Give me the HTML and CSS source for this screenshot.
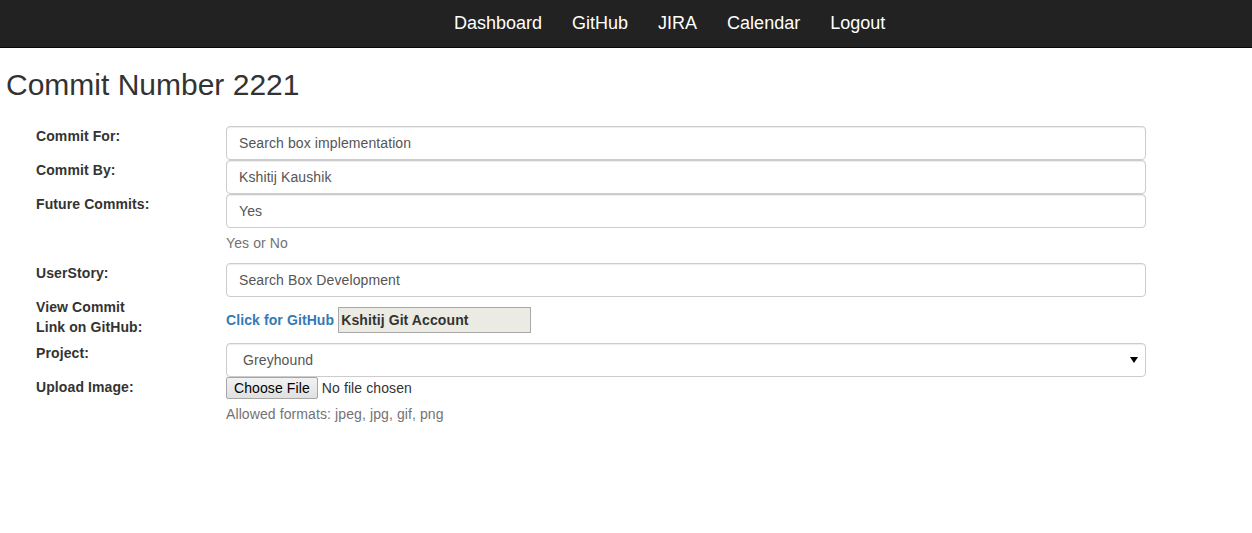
FILE: index.html
```html
<!DOCTYPE html>
<html>
<head>
<meta charset="utf-8">
<title>Commit Number 2221</title>
<link rel="stylesheet" href="styles.css">
</head>
<body>
<nav class="navbar">
  <ul class="nav">
    <li><a href="#">Dashboard</a></li>
    <li><a href="#">GitHub</a></li>
    <li><a href="#">JIRA</a></li>
    <li><a href="#">Calendar</a></li>
    <li><a href="#">Logout</a></li>
  </ul>
</nav>
<h2 class="title">Commit Number 2221</h2>
<form class="form">
  <div class="row">
    <label class="label">Commit For:</label>
    <div class="control"><input class="input" type="text" value="Search box implementation"></div>
  </div>
  <div class="row">
    <label class="label">Commit By:</label>
    <div class="control"><input class="input" type="text" value="Kshitij Kaushik"></div>
  </div>
  <div class="row">
    <label class="label">Future Commits:</label>
    <div class="control">
      <input class="input" type="text" value="Yes">
      <span class="help">Yes or No</span>
    </div>
  </div>
  <div class="row">
    <label class="label">UserStory:</label>
    <div class="control"><input class="input" type="text" value="Search Box Development"></div>
  </div>
  <div class="row">
    <label class="label">View Commit<br>Link on GitHub:</label>
    <div class="control link-line">
      <a class="gh-link" href="#">Click for GitHub</a>
      <input class="account" type="text" value="Kshitij Git Account" disabled>
    </div>
  </div>
  <div class="row">
    <label class="label">Project:</label>
    <div class="control">
      <select class="input select">
        <option>Greyhound</option>
      </select>
    </div>
  </div>
  <div class="row">
    <label class="label">Upload Image:</label>
    <div class="control">
      <input class="file" type="file">
      <span class="help">Allowed formats: jpeg, jpg, gif, png</span>
    </div>
  </div>
</form>
</body>
</html>
```
FILE: styles.css
```css
* { box-sizing: border-box; }
body {
  margin: 0;
  font-family: "Liberation Sans", Arial, Helvetica, sans-serif;
  font-size: 14px;
  line-height: 20px;
  color: #333;
  background: #fff;
}
.navbar {
  background: #222;
  height: 48px;
  border-bottom: 1px solid #080808;
}
.nav {
  list-style: none;
  margin: 0 0 0 439px;
  padding: 0;
  display: flex;
}
.nav a {
  display: block;
  padding: 0 15px;
  line-height: 47px;
  font-size: 18px;
  color: #fff;
  text-decoration: none;
}
.title {
  margin: 20px 0 25px 6px;
  font-size: 30px;
  line-height: 33px;
  font-weight: 500;
  color: #333;
}
.form {
  padding-left: 36px;
  letter-spacing: 0.1px;
}
.row {
  display: grid;
  grid-template-columns: 190px 920px;
}
.label {
  font-weight: bold;
  line-height: 20px;
}
.control {
  display: flex;
  flex-direction: column;
}
.input {
  display: block;
  width: 100%;
  height: 34px;
  padding: 6px 12px;
  font-family: inherit;
  font-size: 14px;
  line-height: 20px;
  letter-spacing: 0.1px;
  color: #555;
  background: #fff;
  border: 1px solid #ccc;
  border-radius: 4px;
  box-shadow: inset 0 1px 1px rgba(0,0,0,.075);
  outline: none;
}
.select {
  appearance: none;
  -webkit-appearance: none;
  padding-left: 16px;
  background-image: url("data:image/svg+xml,%3Csvg xmlns='http://www.w3.org/2000/svg' width='8' height='6'%3E%3Cpath d='M0 0H8L4 6Z' fill='%23000'/%3E%3C/svg%3E");
  background-repeat: no-repeat;
  background-position: right 7px center;
}
.help {
  display: block;
  margin: 5px 0 10px;
  color: #737373;
}
.link-line {
  flex-direction: row;
  align-items: center;
  padding: 10px 0;
}
.gh-link {
  font-weight: bold;
  color: #337ab7;
  text-decoration: none;
  margin-right: 4px;
}
.account {
  width: 193px;
  height: 26px;
  padding: 0 2px;
  font-family: inherit;
  font-size: 14px;
  font-weight: bold;
  letter-spacing: 0.1px;
  color: #333;
  background: #ebebe4;
  border: 1px solid #a9a9a9;
  opacity: 1;
}
.file {
  display: block;
  font-family: inherit;
  font-size: 14px;
  letter-spacing: 0.1px;
  color: #333;
  height: 22px;
}
.file::file-selector-button {
  font-family: inherit;
  font-size: 14px;
  letter-spacing: 0.1px;
  height: 22px;
  padding: 0 7px;
  margin-right: 4px;
  color: #000;
  background: linear-gradient(#f2f2f2, #e0e0e0);
  border: 1px solid #a6a6a6;
  border-radius: 2px;
}
```
